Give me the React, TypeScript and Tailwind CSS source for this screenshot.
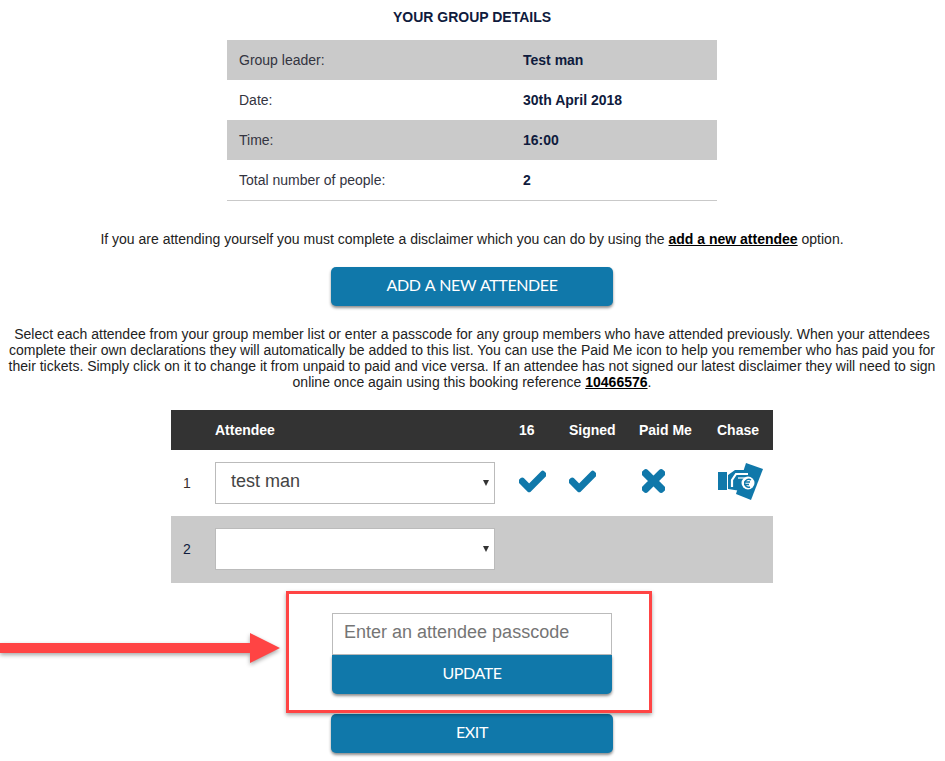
import { FaCheck, FaTimes } from 'react-icons/fa'

const details = [
  { label: 'Group leader:', value: 'Test man' },
  { label: 'Date:', value: '30th April 2018' },
  { label: 'Time:', value: '16:00' },
  { label: 'Total number of people:', value: '2' },
]

const buttonClass =
  "block w-[282px] h-[39px] mx-auto pb-1 rounded-[5px] bg-[#1078aa] text-white text-center text-[16px] tracking-[-0.4px] [word-spacing:1px] font-['Lato',sans-serif] shadow-[0_2px_3px_rgba(0,0,0,0.45)]"

function ChaseIcon() {
  return (
    <svg width="48" height="40" viewBox="0 0 48 40" className="-mt-[5px]">
      <polygon points="29,2 46,8 34,39 19,33" fill="#1078aa" />
      <rect x="1" y="11" width="9" height="18" fill="#1078aa" />
      <path d="M11 14 L18 9 L31 9 L34 14 L28 19 L24 30 L11 28 Z" fill="#1078aa" />
      <path d="M31 13 H19 L15 19 V26" stroke="#fff" strokeWidth="2.2" fill="none" />
      <path d="M21 17 H28" stroke="#fff" strokeWidth="1.2" fill="none" />
      <circle cx="31" cy="22" r="6.5" fill="#fff" />
      <path d="M34 19 A4 4 0 1 0 33 26 M27 21 H33 M27 23.5 H32" stroke="#1078aa" strokeWidth="1.4" fill="none" />
    </svg>
  )
}

function AttendeeSelect({ value }: { value: string }) {
  return (
    <div className="relative w-[280px] h-[42px] bg-white border border-[#bbbbbb]">
      <div className="pl-[15px] text-[18px] leading-[36px] text-[#444444]">{value}</div>
      <div className="absolute right-[5px] top-[17px] w-0 h-0 border-x-[3px] border-x-transparent border-t-[6px] border-t-[#333333]" />
    </div>
  )
}

export default function App() {
  return (
    <div className="relative w-[944px] h-[761px] overflow-hidden bg-white font-['Liberation_Sans',Arial,sans-serif] text-[14px] leading-[16px] text-[#222222]">
      <h1 className="pt-[9px] mb-[15px] text-center font-bold text-[#0f1b3d]">YOUR GROUP DETAILS</h1>

      <div className="w-[490px] mx-auto border-b border-[#c9c9c9]">
        {details.map((row, i) => (
          <div key={row.label} className={`flex items-center h-10 pl-3 ${i % 2 === 0 ? 'bg-[#cacaca]' : 'bg-white'}`}>
            <div className="w-[284px] text-[#33343f]">{row.label}</div>
            <div className="font-bold text-[#0f1b3d]">{row.value}</div>
          </div>
        ))}
      </div>

      <p className="mt-[30px] text-center">
        If you are attending yourself you must complete a disclaimer which you can do by using the{' '}
        <a className="font-bold underline text-black">add a new attendee</a> option.
      </p>

      <button className={`${buttonClass} mt-5`}>ADD A NEW ATTENDEE</button>

      <p className="w-[935px] mx-auto mt-5 text-center">
        Select each attendee from your group member list or enter a passcode for any group members who have attended
        previously. When your attendees complete their own declarations they will automatically be added to this list.
        You can use the Paid Me icon to help you remember who has paid you for their tickets. Simply click on it to
        change it from unpaid to paid and vice versa. If an attendee has not signed our latest disclaimer they will need
        to sign online once again using this booking reference{' '}
        <a className="font-bold underline text-black">10466576</a>.
      </p>

      <div className="w-[602px] mx-auto mt-5">
        <div className="grid grid-cols-[44px_304px_50px_70px_78px_56px] items-center h-10 bg-[#333333] text-white font-bold">
          <div />
          <div>Attendee</div>
          <div>16</div>
          <div>Signed</div>
          <div>Paid Me</div>
          <div>Chase</div>
        </div>
        <div className="grid grid-cols-[44px_304px_50px_70px_78px_56px] items-center h-[66px] bg-white">
          <div className="pl-3 text-[#3a2f2a]">1</div>
          <AttendeeSelect value="test man" />
          <FaCheck strokeWidth={30} className="w-[27px] h-[27px] -mt-1 text-[#1078aa]" />
          <FaCheck strokeWidth={30} className="w-[27px] h-[27px] -mt-1 text-[#1078aa]" />
          <FaTimes strokeWidth={30} className="w-[23px] h-[32px] ml-[3px] -mt-1 text-[#1078aa]" />
          <ChaseIcon />
        </div>
        <div className="grid grid-cols-[44px_304px_50px_70px_78px_56px] items-center h-[67px] pb-px bg-[#cacaca]">
          <div className="pl-3 text-[#0f1b3d]">2</div>
          <AttendeeSelect value="" />
        </div>
      </div>

      <div className="w-[280px] h-[42px] mx-auto mt-[30px] pl-[11px] bg-white border border-[#bbbbbb] text-[18px] leading-[36px] text-[#757575]">
        Enter an attendee passcode
      </div>
      <button className={`${buttonClass} !w-[280px] rounded-t-none`}>UPDATE</button>
      <button className={`${buttonClass} mt-5`}>EXIT</button>

      {/* red annotation drawn on top of the screenshot */}
      <div className="absolute left-[286px] top-[591px] w-[366px] h-[122px] border-[3px] border-[#ff4444] shadow-[0_2px_4px_rgba(0,0,0,0.35)]" />
      <svg className="absolute left-0 top-[630px]" width="285" height="38" viewBox="0 0 285 38">
        <polygon points="0,13 250,13 250,3 280,18 250,33 250,23 0,23" fill="#ff4444" style={{ filter: 'drop-shadow(0 2px 2px rgba(0,0,0,0.35))' }} />
      </svg>
    </div>
  )
}
